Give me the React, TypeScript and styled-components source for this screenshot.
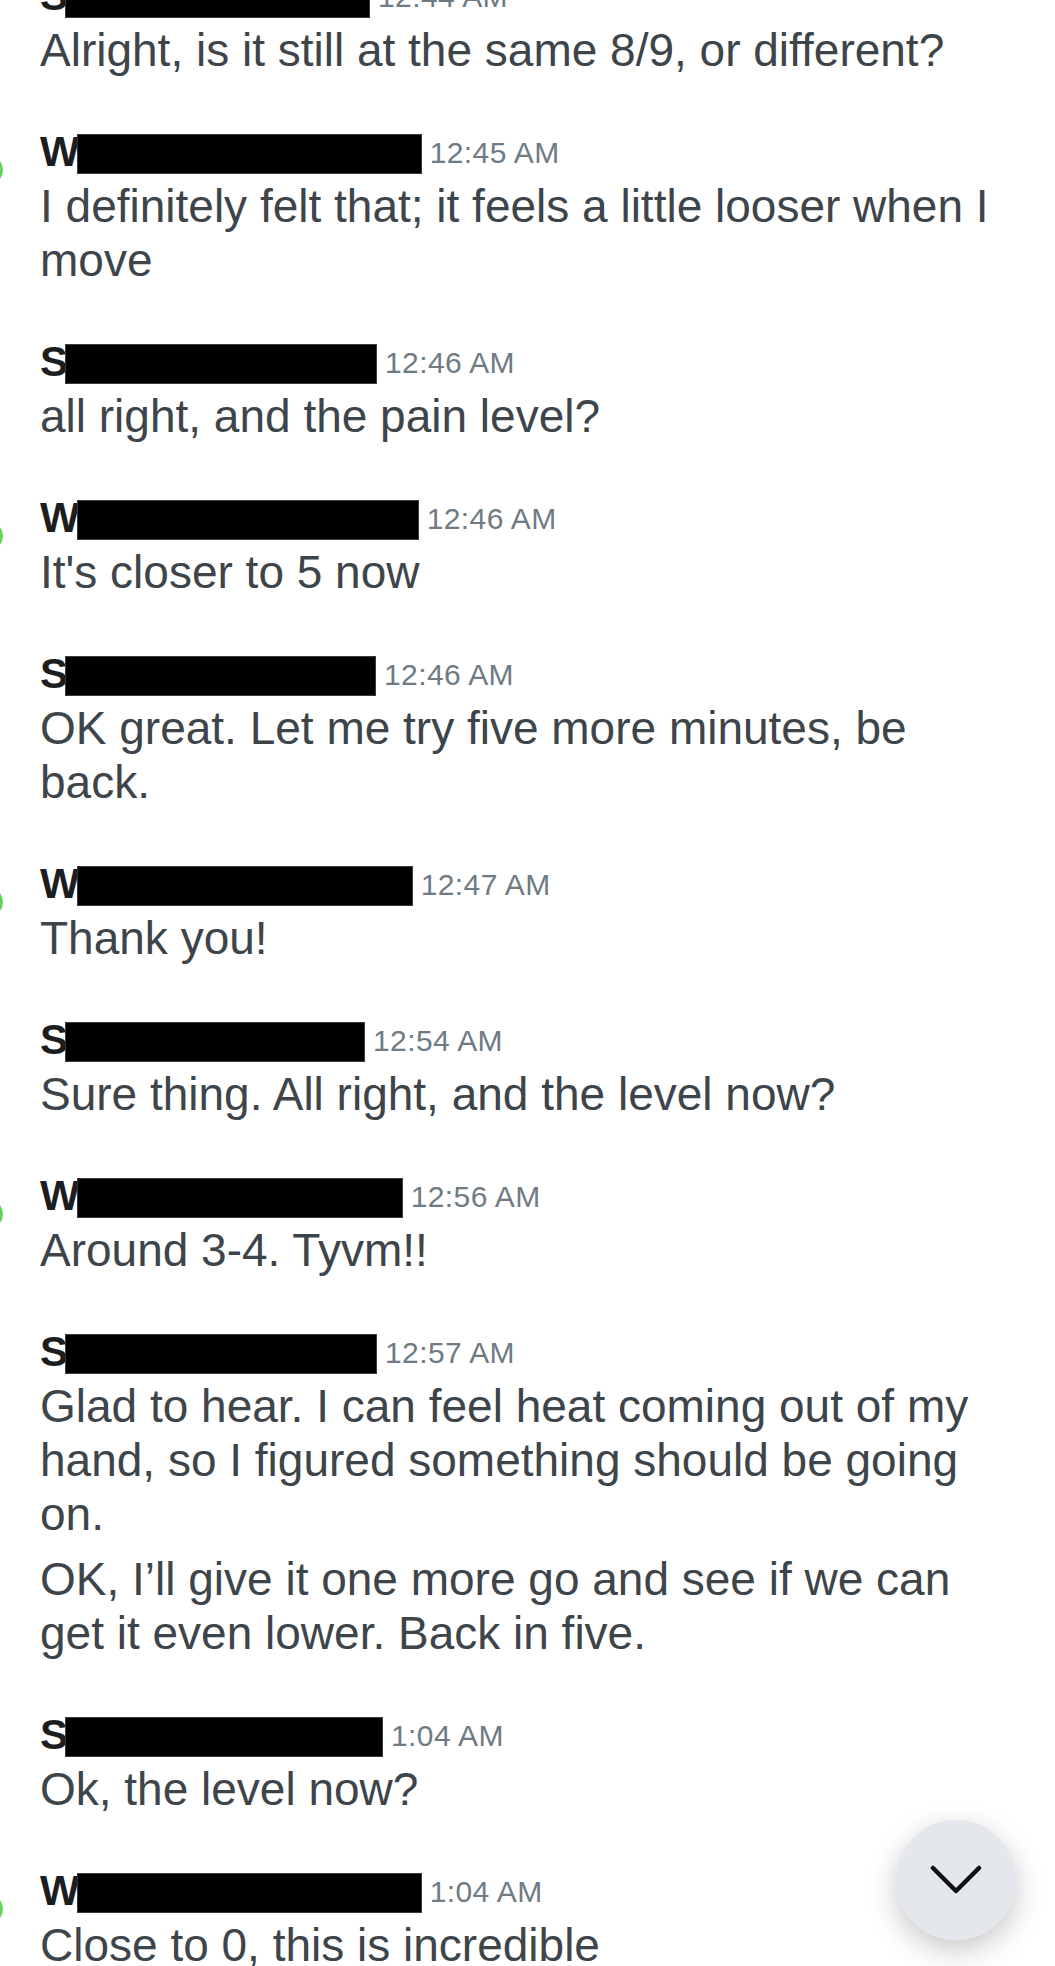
import React from 'react';
import styled, { createGlobalStyle } from 'styled-components';

const GlobalStyle = createGlobalStyle`
  html, body {
    margin: 0;
    padding: 0;
    background: #ffffff;
    overflow: hidden;
  }
  body {
    font-family: "Liberation Sans", Arial, sans-serif;
  }
`;

type Message = {
  initial: string;
  redactWidth: number;
  time: string;
  online?: boolean;
  paragraphs: string[];
};

const messages: Message[] = [
  { initial: 'S', redactWidth: 305, time: '12:44 AM', paragraphs: ['Alright, is it still at the same 8/9, or different?'] },
  { initial: 'W', redactWidth: 345, time: '12:45 AM', online: true, paragraphs: ['I definitely felt that; it feels a little looser when I move'] },
  { initial: 'S', redactWidth: 312, time: '12:46 AM', paragraphs: ['all right, and the pain level?'] },
  { initial: 'W', redactWidth: 342, time: '12:46 AM', online: true, paragraphs: ["It's closer to 5 now"] },
  { initial: 'S', redactWidth: 311, time: '12:46 AM', paragraphs: ['OK great. Let me try five more minutes, be back.'] },
  { initial: 'W', redactWidth: 336, time: '12:47 AM', online: true, paragraphs: ['Thank you!'] },
  { initial: 'S', redactWidth: 300, time: '12:54 AM', paragraphs: ['Sure thing. All right, and the level now?'] },
  { initial: 'W', redactWidth: 326, time: '12:56 AM', online: true, paragraphs: ['Around 3-4. Tyvm!!'] },
  {
    initial: 'S',
    redactWidth: 312,
    time: '12:57 AM',
    paragraphs: [
      'Glad to hear. I can feel heat coming out of my hand, so I figured something should be going on.',
      'OK, I\u2019ll give it one more go and see if we can get it even lower. Back in five.',
    ],
  },
  { initial: 'S', redactWidth: 318, time: '1:04 AM', paragraphs: ['Ok, the level now?'] },
  { initial: 'W', redactWidth: 345, time: '1:04 AM', online: true, paragraphs: ['Close to 0, this is incredible'] },
];

const Thread = styled.div`
  padding: 0 43px 0 40px;
  margin-top: -31px;
`;

const Block = styled.div`
  & + & {
    margin-top: 48px;
  }
`;

const Header = styled.div`
  position: relative;
  font-size: 46px;
  line-height: 54px;
  height: 54px;
  white-space: nowrap;
`;

const Initial = styled.span`
  font-size: 42px;
  font-weight: 700;
  color: #1b1d1f;
  vertical-align: 3px;
`;

const Redaction = styled.span<{ $width: number }>`
  display: inline-block;
  width: ${(p) => p.$width}px;
  height: 40px;
  margin-left: -3px;
  vertical-align: -5px;
  background: #000000;
  border: 1px solid #3a3a3a;
  box-sizing: border-box;
`;

const Time = styled.span`
  margin-left: 8px;
  font-size: 30px;
  letter-spacing: 0.4px;
  color: #6f7b84;
  vertical-align: 6px;
`;

const Presence = styled.span`
  position: absolute;
  left: -67px;
  top: 30px;
  width: 30px;
  height: 30px;
  border-radius: 50%;
  background: #66d25e;
`;

const Text = styled.p`
  margin: 0;
  font-size: 46px;
  line-height: 54px;
  color: #3d454b;
  & + & {
    margin-top: 11px;
  }
`;

const ScrollButton = styled.button`
  position: fixed;
  right: 39px;
  bottom: 26px;
  width: 120px;
  height: 120px;
  border: none;
  border-radius: 50%;
  background: #e4e8ec;
  box-shadow: 0 10px 30px rgba(0, 0, 0, 0.22);
  display: flex;
  align-items: center;
  justify-content: center;
  padding: 0;
`;

export default function App() {
  return (
    <>
      <GlobalStyle />
      <Thread>
        {messages.map((m, i) => (
          <Block key={i}>
            <Header>
              {m.online && <Presence />}
              <Initial>{m.initial}</Initial>
              <Redaction $width={m.redactWidth} />
              <Time>{m.time}</Time>
            </Header>
            {m.paragraphs.map((t, j) => (
              <Text key={j}>{t}</Text>
            ))}
          </Block>
        ))}
      </Thread>
      <ScrollButton aria-label="Scroll to latest">
        <svg width="52" height="30" viewBox="0 0 52 30" fill="none">
          <path d="M3 3 L26 26 L49 3" stroke="#111" strokeWidth="4.5" strokeLinecap="round" strokeLinejoin="round" />
        </svg>
      </ScrollButton>
    </>
  );
}
